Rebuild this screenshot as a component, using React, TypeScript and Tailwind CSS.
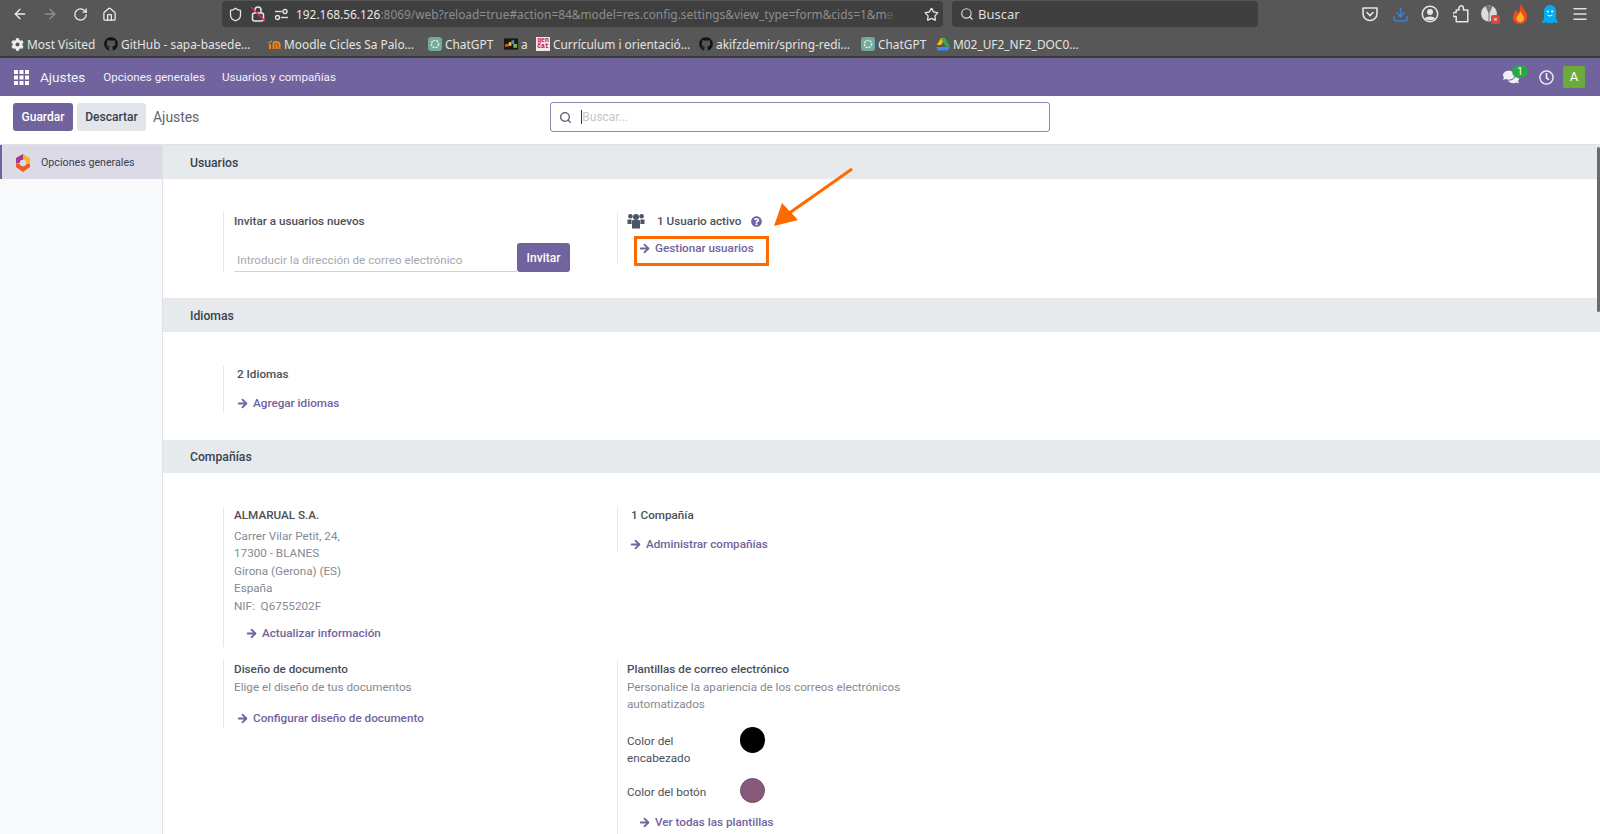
import React from 'react';
import { ArrowLeft, ArrowRight, RotateCw, Home, Shield, Star, Search, Download, Menu } from 'lucide-react';
import { FaGithub, FaQuestionCircle, FaComments, FaRegClock, FaCog } from 'react-icons/fa';

function GridIcon() {
  const cells = [0, 5.5, 11];
  return (
    <svg width="15" height="15" viewBox="0 0 15 15" fill="#fff">
      {cells.map((y) => cells.map((x) => <rect key={`${x}-${y}`} x={x} y={y} width="4" height="4" />))}
    </svg>
  );
}

function ChatGptIcon() {
  return (
    <svg width="14" height="14" viewBox="0 0 14 14">
      <rect width="14" height="14" rx="3" fill="#74aa9c" />
      <circle cx="7" cy="7" r="3.6" fill="none" stroke="#e6f2ef" strokeWidth="1.4" strokeDasharray="2 1" />
    </svg>
  );
}

function MoodleIcon() {
  return (
    <svg width="14" height="14" viewBox="0 0 14 14" fill="none">
      <path d="M1 6 L5 4" stroke="#aaa" strokeWidth="1" />
      <path d="M3 12 V7 M6.5 12 V6.5 Q6.5 5 9 5 Q12.5 5 12.5 7.5 V12 M9.5 12 V7" stroke="#f98012" strokeWidth="2" />
    </svg>
  );
}

function PixelIcon() {
  return (
    <svg width="15" height="12" viewBox="0 0 15 12">
      <rect width="15" height="12" fill="#1b1410" />
      <rect x="1" y="6" width="4" height="3" fill="#c9542d" />
      <rect x="5" y="4" width="3" height="4" fill="#e6c233" />
      <rect x="8" y="2" width="3" height="4" fill="#3f8fc4" />
      <rect x="10" y="6" width="4" height="4" fill="#7eb35a" />
    </svg>
  );
}

function GencatIcon() {
  return (
    <div className="w-[14px] h-[14px] bg-[#f4e6e2] flex flex-col items-center justify-center text-[6.5px] leading-[6px] font-bold text-[#c8102e] [font-family:'Liberation_Mono',monospace]">
      <span>gen</span>
      <span>cat</span>
    </div>
  );
}

function DriveIcon() {
  return (
    <svg width="14" height="13" viewBox="0 0 14 13">
      <path d="M5 0 H9 L5.2 7 H0.8 Z M5 0 L1 7" fill="#fbbc04" />
      <path d="M9 0 L14 8.5 H9.6 L5 0.5 Z" fill="#34a853" />
      <path d="M0 9 H14 L12 12.5 H2 Z" fill="#4285f4" />
    </svg>
  );
}

function LockOffIcon() {
  return (
    <svg width="16" height="18" viewBox="0 0 16 18" fill="none">
      <rect x="2.5" y="8" width="11" height="8" rx="2" stroke="#e8e8e8" strokeWidth="1.5" />
      <path d="M5 8 V5 A3 3 0 0 1 11 5 V8" stroke="#e8e8e8" strokeWidth="1.5" />
      <path d="M1 2 L15 16" stroke="#e22850" strokeWidth="1.5" />
    </svg>
  );
}

function SlidersIcon() {
  return (
    <svg width="15" height="13" viewBox="0 0 15 13" fill="none" stroke="#e0e0e0" strokeWidth="1.4">
      <path d="M1 3.5 H8" />
      <circle cx="11" cy="3.5" r="2" />
      <path d="M14 9.5 H7" />
      <circle cx="3.5" cy="9.5" r="2" />
    </svg>
  );
}

function PocketIcon() {
  return (
    <svg width="18" height="18" viewBox="0 0 18 18" fill="none" stroke="#e6e6e6" strokeWidth="1.6">
      <path d="M2 3 H16 V8.5 C16 12.5 12.8 15.5 9 15.5 C5.2 15.5 2 12.5 2 8.5 Z" strokeLinejoin="round" />
      <path d="M6 7.5 L9 10.5 L12 7.5" strokeLinecap="round" />
    </svg>
  );
}

function AccountIcon() {
  return (
    <svg width="18" height="18" viewBox="0 0 18 18">
      <circle cx="9" cy="9" r="7.7" fill="none" stroke="#e6e6e6" strokeWidth="1.5" />
      <circle cx="9" cy="7" r="3" fill="#e6e6e6" />
      <path d="M3.6 13.5 C5 10.8 13 10.8 14.4 13.5 C12.5 15.8 5.5 15.8 3.6 13.5 Z" fill="#e6e6e6" />
    </svg>
  );
}

function ExtensionIcon() {
  return (
    <svg width="16" height="18" viewBox="0 0 16 18" fill="none" stroke="#e6e6e6" strokeWidth="1.5" strokeLinejoin="round">
      <path d="M6 5 V3 A2.2 2.2 0 0 1 10.4 3 V5 H14.8 V16.8 H3.2 V11.6 H1.6 A2 2 0 0 1 1.6 7.6 H3.2 V5 Z" />
    </svg>
  );
}

function GhosteryBlockIcon() {
  return (
    <div className="relative w-[18px] h-[18px]">
      <svg width="18" height="18" viewBox="0 0 18 18">
        <circle cx="8" cy="8.5" r="8" fill="#dcdcdc" />
        <path d="M5 1.5 L8 8 L11 1.5 Z M8 8 V16" fill="#777" stroke="#777" />
      </svg>
      <div className="absolute right-[-1px] bottom-[-1px] w-[9px] h-[9px] rounded-[2px] bg-[#d9453c] flex items-center justify-center text-[7px] leading-none text-white">×</div>
    </div>
  );
}

function FlameIcon() {
  return (
    <svg width="16" height="20" viewBox="0 0 16 20">
      <path d="M8.5 0 C10 4 15 7 15 12.5 C15 17 11.5 20 8 20 C4 20 1 17 1 13 C1 10 3 8.5 3.5 6 C5 7 5.5 8 5.8 9.5 C7.5 7 8.5 4 8.5 0 Z" fill="#f2491d" />
      <path d="M8.5 7 C9.5 10 12 11.5 12 14.5 C12 17 10 18 8 18 C6 18 4.5 16.5 4.5 14.5 C4.5 12 7.5 11 8.5 7 Z" fill="#fbb02c" />
    </svg>
  );
}

function GhostIcon() {
  return (
    <svg width="16" height="19" viewBox="0 0 16 19">
      <path d="M8 0 C12 0 14 3 14 7 V14 L16 17.5 C14.5 18.5 13 18 12 17 C11 18.5 9.5 19 8 17.5 C6.5 19 5 18.5 4 17 C3 18 1.5 18.5 0 17.5 L2 14 V7 C2 3 4 0 8 0 Z" fill="#00aef0" />
      <circle cx="5.8" cy="6.5" r="1.1" fill="#fff" />
      <circle cx="10.2" cy="6.5" r="1.1" fill="#fff" />
      <path d="M5.5 10 Q8 12.2 10.5 10" stroke="#fff" strokeWidth="1" fill="none" />
    </svg>
  );
}

function SettingsLogo() {
  return (
    <svg width="16" height="18" viewBox="0 0 16 18">
      <path d="M8 0 L1 4 V9 H5 L8 5.5 Z" fill="#a23a8e" />
      <path d="M8 0 L15 4 V10 H11 L8 5.5 Z" fill="#f7b52a" />
      <path d="M1 9 V13 L8 18 L15 13 V10 H11 L8 12.5 L5 10 Z" fill="#f2581e" />
      <circle cx="8" cy="9" r="3.2" fill="#dcdae7" />
    </svg>
  );
}

function UsersIcon() {
  return (
    <svg width="18" height="16" viewBox="0 0 18 16" fill="#4b5563">
      <circle cx="3.4" cy="3.2" r="2.3" />
      <circle cx="14.6" cy="3.2" r="2.3" />
      <circle cx="9" cy="4" r="3" />
      <path d="M0.5 6.5 H4.6 V11 H0.5 Z" />
      <path d="M13.4 6.5 H17.5 V11 H13.4 Z" />
      <path d="M5 8 Q5 7 6 7 H12 Q13 7 13 8 V15.5 H5 Z" />
    </svg>
  );
}

const bookmarks = [
  { icon: <FaCog className="text-[#eeeeee]" size={13} />, label: 'Most Visited', cls: 'w-[94px]' },
  { icon: <FaGithub className="text-[#111111]" size={14} />, label: 'GitHub - sapa-basede…', cls: 'w-[163px]' },
  { icon: <MoodleIcon />, label: 'Moodle Cicles Sa Palo…', cls: 'w-[161px]' },
  { icon: <ChatGptIcon />, label: 'ChatGPT', cls: 'w-[76px]' },
  { icon: <PixelIcon />, label: 'a', cls: 'w-[32px]' },
  { icon: <GencatIcon />, label: 'Currículum i orientació…', cls: 'w-[163px]' },
  { icon: <FaGithub className="text-[#111111]" size={14} />, label: 'akifzdemir/spring-redi…', cls: 'w-[162px]' },
  { icon: <ChatGptIcon />, label: 'ChatGPT', cls: 'w-[75px]' },
  { icon: <DriveIcon />, label: 'M02_UF2_NF2_DOC0…', cls: 'w-[160px]' },
];

function BrowserChrome() {
  return (
    <div className="h-[58px] bg-[#575757] border-b-2 border-[#3a3a3a] text-[#e6e6e6] [font-family:'Noto_Sans',sans-serif] shrink-0">
      <div className="h-[28px] flex items-center">
        <div className="w-[222px] flex items-center pl-[12px] shrink-0">
          <ArrowLeft size={16} className="w-[16px] text-[#eeeeee]" />
          <ArrowRight size={16} className="ml-[14px] text-[#8f8f8f]" />
          <RotateCw size={15} className="ml-[15px] text-[#eeeeee]" />
          <Home size={15} className="ml-[14px] text-[#eeeeee]" />
        </div>
        <div className="w-[721px] h-[26px] bg-[#3f3f3f] rounded-[4px] flex items-center pl-[6px] pr-[5px] shrink-0">
          <Shield size={15} className="text-[#e8e8e8] shrink-0" />
          <div className="ml-[7px] shrink-0"><LockOffIcon /></div>
          <div className="ml-[8px] shrink-0"><SlidersIcon /></div>
          <div className="ml-[7px] w-[628px] shrink-0 whitespace-nowrap pt-[1px] text-[11.9px] text-[#8e8e8e]">
            <span className="text-[#e8e8e8]">192.168.56.126</span>:8069/web?reload=true#action=84&amp;model=res.config.settings&amp;view_type=form&amp;cids=1&amp;m<span className="text-[#5e5e5e]">e</span>
          </div>
          <Star size={15} className="text-[#e8e8e8] shrink-0" />
        </div>
        <div className="ml-[9px] w-[306px] h-[26px] bg-[#3f3f3f] rounded-[4px] flex items-center pl-[8px] text-[13px] text-[#dddddd] shrink-0">
          <Search size={14} className="text-[#dddddd]" />
          <span className="ml-[4px] pt-[1px]">Buscar</span>
        </div>
        <div className="ml-[103px] flex items-center shrink-0">
          <div className="w-[18px] flex justify-center"><PocketIcon /></div>
          <div className="ml-[12px] w-[18px] flex justify-center"><Download size={17} className="text-[#3f83d6]" /></div>
          <div className="ml-[12px] w-[18px] flex justify-center"><AccountIcon /></div>
          <div className="ml-[13px] w-[18px] flex justify-center"><ExtensionIcon /></div>
          <div className="ml-[11px] w-[18px] flex justify-center"><GhosteryBlockIcon /></div>
          <div className="ml-[12px] w-[18px] flex justify-center"><FlameIcon /></div>
          <div className="ml-[12px] w-[18px] flex justify-center"><GhostIcon /></div>
          <div className="ml-[12px] w-[18px] flex justify-center"><Menu size={18} className="text-[#e0e0e0]" /></div>
        </div>
      </div>
      <div className="h-[28px] flex items-center pl-[10px] pt-[5px] text-[11.9px] text-[#e4e4e4]">
        {bookmarks.map((b, i) => (
          <div key={i} className={`${b.cls} flex items-center gap-[3px] shrink-0 whitespace-nowrap`}>
            <span className="w-[14px] flex justify-center shrink-0">{b.icon}</span>
            <span>{b.label}</span>
          </div>
        ))}
      </div>
    </div>
  );
}

function NavBar() {
  return (
    <div className="h-[38px] bg-[#71639e] flex items-center text-white shrink-0">
      <div className="ml-[14px]"><GridIcon /></div>
      <span className="ml-[11px] text-[13.6px] text-[#f3f1f8]">Ajustes</span>
      <span className="ml-[18px] pt-[1px] text-[11.6px] text-[#f3f1f8]">Opciones generales</span>
      <span className="ml-[17px] pt-[1px] text-[11.6px] text-[#f3f1f8]">Usuarios y compañías</span>
      <div className="ml-auto flex items-center pr-[15px]">
        <div className="relative">
          <FaComments size={16} className="text-[#f1eff6]" />
          <span className="absolute left-[9px] top-[-4px] w-[16px] h-[13px] rounded-full bg-[#28a745] text-[10px] leading-[13px] text-center text-white">1</span>
        </div>
        <FaRegClock size={15} className="ml-[20px] text-[#f1eff6]" />
        <div className="ml-[9px] w-[22px] h-[22px] rounded-[2px] bg-[#6cab3a] text-[13px] leading-[22px] text-center text-white">A</div>
      </div>
    </div>
  );
}

function ControlPanel() {
  return (
    <div className="h-[49px] bg-white border-b border-[#dee2e6] flex items-start pt-[7px] pl-[13px] shrink-0">
      <button className="w-[60px] h-[28px] rounded-[3px] bg-[#71639e] text-white text-[12px] font-medium">Guardar</button>
      <button className="ml-[4px] w-[69px] h-[28px] rounded-[3px] bg-[#e2e5ea] text-[#374151] text-[12px] font-medium">Descartar</button>
      <span className="ml-[7px] text-[13.9px] leading-[28px] text-[#5f6470]">Ajustes</span>
      <div className="ml-[351px] -mt-[1px] w-[500px] h-[30px] border border-[#8f84b5] rounded-[3px] flex items-center pl-[8px] text-[12px] text-[#c4c6cb]">
        <Search size={13} strokeWidth={2.4} className="text-[#555b66]" />
        <span className="ml-[9px] w-px h-[14px] bg-[#333333]" />
        <span>Buscar...</span>
      </div>
    </div>
  );
}

function SectionHeader({ title, cls }: { title: string; cls: string }) {
  return <div className={`${cls} bg-[#e6eaed] pl-[27px] flex items-center text-[12.2px] font-medium text-[#374151]`}>{title}</div>;
}

function LinkRow({ label, cls }: { label: string; cls?: string }) {
  return (
    <div className={`flex items-center text-[11.7px] font-medium text-[#71639e] ${cls ?? ''}`}>
      <ArrowRight size={13} strokeWidth={3.4} className="w-[13px] shrink-0" />
      <span className="ml-[4px]">{label}</span>
    </div>
  );
}

const muted = 'text-[11.7px] leading-[17.5px] text-[#858993]';
const strong = 'text-[11.7px] leading-[17.5px] font-medium text-[#4b5058]';

export default function App() {
  return (
    <div className="w-[1600px] h-[834px] overflow-hidden flex flex-col bg-white [font-family:Roboto,sans-serif] relative">
      <BrowserChrome />
      <NavBar />
      <ControlPanel />
      <div className="flex-1 flex min-h-0">
        {/* Sidebar */}
        <div className="w-[163px] bg-[#f8f9fa] border-r border-[#dee2e6] shrink-0">
          <div className="h-[34px] bg-[#dcdae7] border-l-2 border-[#71639e] flex items-center pl-[13px] pt-[2px] text-[10.7px] text-[#374151]">
            <SettingsLogo />
            <span className="ml-[10px]">Opciones generales</span>
          </div>
        </div>

        {/* Settings */}
        <div className="flex-1 min-w-0">
          <SectionHeader title="Usuarios" cls="h-[34px] pt-[2px]" />
          <div className="h-[119px] pt-[33px] pl-[60px] flex items-start">
            <div className="w-[394px] h-[60px] border-l border-[#e5e7eb] pl-[10px]">
              <div className="text-[11.7px] leading-[18px] font-medium text-[#4b5058]">Invitar a usuarios nuevos</div>
              <div className="mt-[13px] flex items-end">
                <div className="w-[283px] h-[29px] border-b border-[#ced4da] pl-[3px] flex items-end pb-[1px] text-[11.7px] text-[#a4a8b0]">
                  Introducir la dirección de correo electrónico
                </div>
                <button className="w-[53px] h-[29px] rounded-[3px] bg-[#71639e] text-white text-[12px] font-medium">Invitar</button>
              </div>
            </div>
            <div className="w-[394px] h-[51px] border-l border-[#e5e7eb] pl-[9px]">
              <div className="flex items-center h-[18px]">
                <UsersIcon />
                <span className="ml-[12px] pt-[2px] text-[11.7px] font-medium text-[#4b5058]">1 Usuario activo</span>
                <FaQuestionCircle size={11} className="ml-[10px] mt-[1px] text-[#71639e]" />
              </div>
              <LinkRow label="Gestionar usuarios" cls="mt-[10px] ml-[11px]" />
            </div>
          </div>

          <SectionHeader title="Idiomas" cls="h-[34px] pt-[2px]" />
          <div className="h-[108px] pt-[34px] pl-[60px]">
            <div className="w-[394px] h-[47px] border-l border-[#e5e7eb] pl-[13px]">
              <div className={strong}>2 Idiomas</div>
              <LinkRow label="Agregar idiomas" cls="mt-[11px] -ml-[1px]" />
            </div>
          </div>

          <SectionHeader title="Compañías" cls="h-[33px] pt-[1px]" />
          <div className="pt-[34px] pl-[60px]">
            <div className="flex items-start">
              <div className="w-[394px] h-[140px] border-l border-[#e5e7eb] pl-[10px]">
                <div className={strong}>ALMARUAL S.A.</div>
                <div className={`mt-[3px] ${muted}`}>
                  <div>Carrer Vilar Petit, 24,</div>
                  <div>17300 - BLANES</div>
                  <div>Girona (Gerona) (ES)</div>
                  <div>España</div>
                  <div>NIF:&nbsp; Q6755202F</div>
                </div>
                <LinkRow label="Actualizar información" cls="mt-[10px] ml-[11px]" />
              </div>
              <div className="w-[394px] h-[46px] border-l border-[#e5e7eb] pl-[13px]">
                <div className={strong}>1 Compañía</div>
                <LinkRow label="Administrar compañías" cls="mt-[11px] -ml-[2px]" />
              </div>
            </div>

            <div className="mt-[13px] flex items-start">
              <div className="w-[394px] h-[68px] border-l border-[#e5e7eb] pl-[10px] pt-[1px]">
                <div className={strong}>Diseño de documento</div>
                <div className={muted}>Elige el diseño de tus documentos</div>
                <LinkRow label="Configurar diseño de documento" cls="mt-[14px] ml-[2px]" />
              </div>
              <div className="w-[320px] h-[200px] border-l border-[#e5e7eb] pl-[9px] pt-[1px]">
                <div className={strong}>Plantillas de correo electrónico</div>
                <div className={muted}>Personalice la apariencia de los correos electrónicos automatizados</div>
                <div className="mt-[13px] flex items-start">
                  <div className="w-[90px] mr-[23px] mt-[6px] text-[11.7px] leading-[17.5px] text-[#4b5058]">Color del encabezado</div>
                  <div className="w-[25px] h-[26px] rounded-full bg-black" />
                </div>
                <div className="mt-[10px] flex items-center">
                  <div className="w-[113px] pt-[6px] text-[11.7px] leading-[17.5px] text-[#4b5058]">Color del botón</div>
                  <div className="w-[25px] h-[25px] rounded-full bg-[#875a7b] border border-[#6f4a66]" />
                </div>
                <LinkRow label="Ver todas las plantillas" cls="mt-[11px] ml-[11px]" />
              </div>
            </div>
          </div>
        </div>
      </div>

      {/* Scrollbar thumb */}
      <div className="absolute right-0 top-[147px] w-[3px] h-[165px] bg-[#6b6b6b] rounded-full" />

      {/* Annotation over the page */}
      <div className="absolute left-[634px] top-[236px] w-[135px] h-[30px] border-[3px] border-[#ff6a00]" />
      <svg className="absolute left-[760px] top-[160px]" width="100" height="75" viewBox="0 0 100 75" fill="none">
        <path d="M92 9 L28 54" stroke="#ff6a00" strokeWidth="3" />
        <path d="M14 66 L22 43 L38 60 Z" fill="#ff6a00" />
      </svg>
    </div>
  );
}
